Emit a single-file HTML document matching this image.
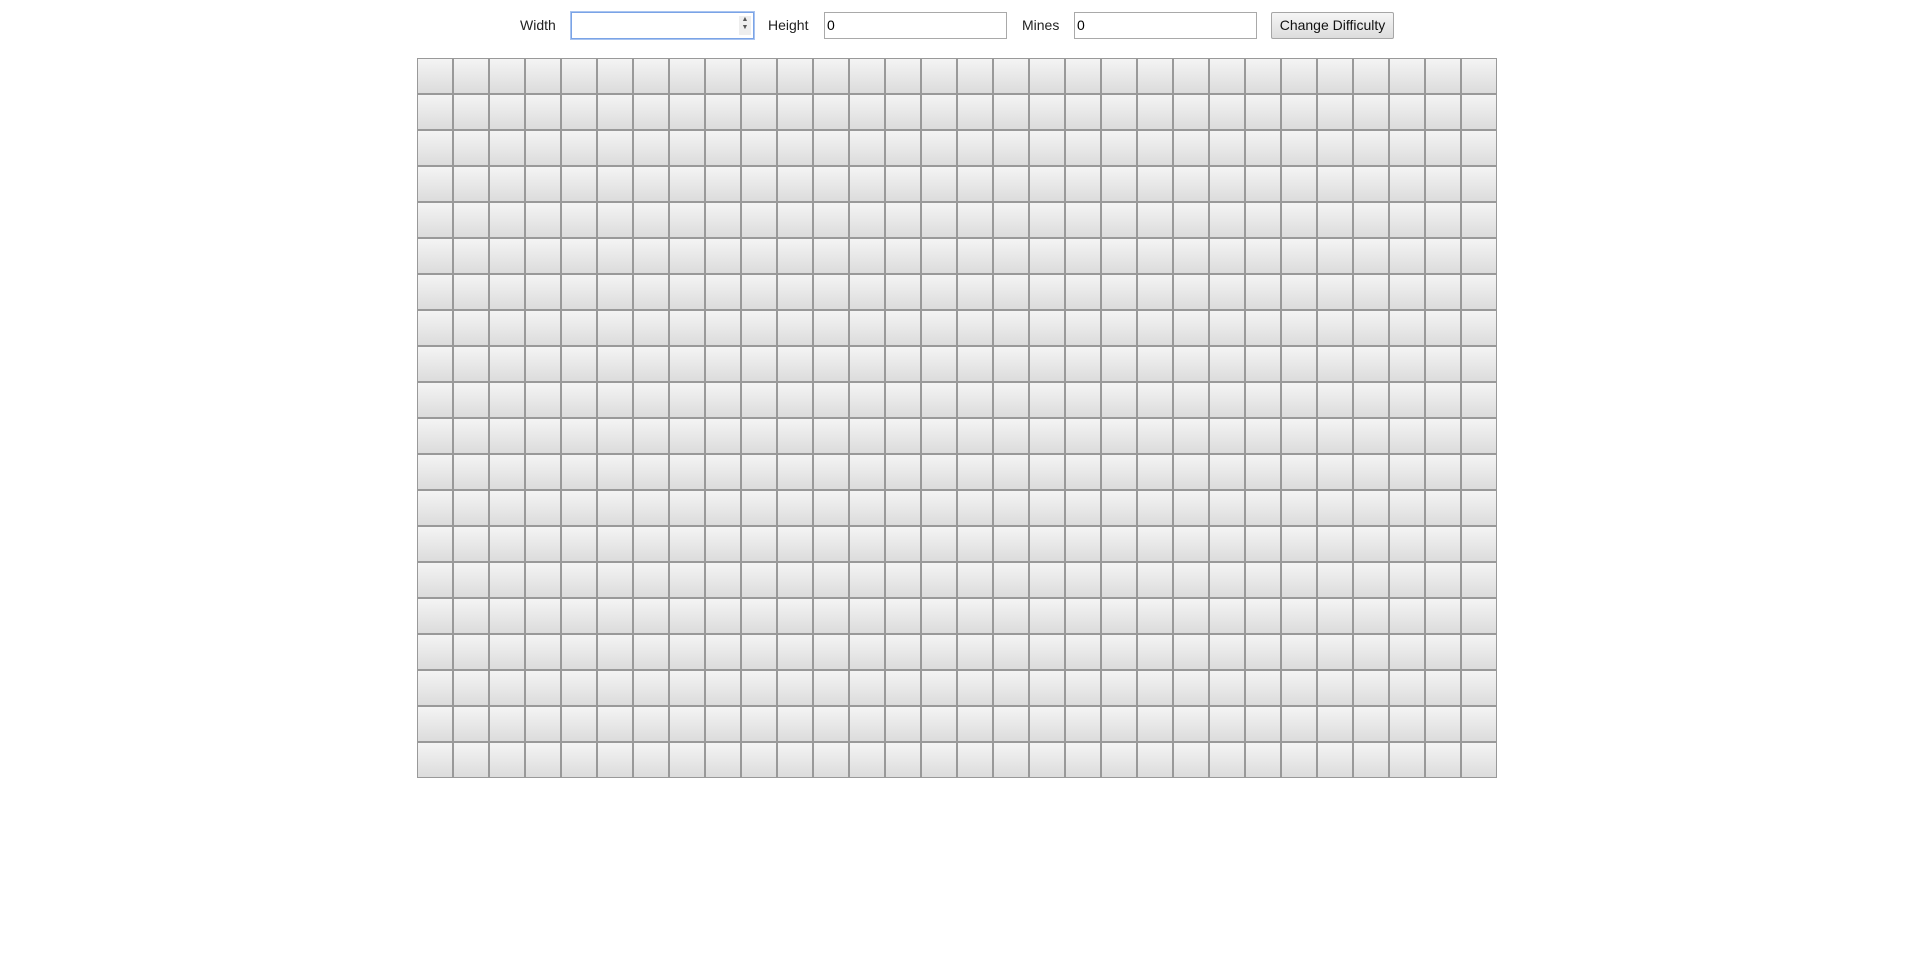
<!DOCTYPE html>
<html><head><meta charset="utf-8"><style>
html,body{margin:0;padding:0;background:#fff;width:1917px;height:974px;overflow:hidden;font-family:"Liberation Sans",Arial,sans-serif;}
.l{position:absolute;top:16px;font-size:14px;color:#222;line-height:18px;}
.in{position:absolute;top:12px;height:27px;box-sizing:border-box;border:1px solid #a9a9a9;background:#fff;font-size:14px;line-height:25px;padding-left:2px;color:#000;}
.btn{position:absolute;top:12px;left:1271px;width:123px;height:27px;box-sizing:border-box;border:1px solid #a6a6a6;border-radius:2px;background:linear-gradient(#f6f6f6,#dddddd);font-size:14px;line-height:25px;text-align:center;color:#111;}
#g{position:absolute;left:417px;top:58px;display:grid;grid-template-columns:repeat(30,36px);grid-auto-rows:36px;}
#g div{box-sizing:border-box;border:1px solid #999;background:linear-gradient(#f4f4f4,#dcdcdc);}
</style></head><body>
<div class="l" style="left:520px">Width</div>
<div class="in" style="left:571px;width:183px;border:1px solid #7aa3e6;box-shadow:0 0 0 1px #a9c4f0;"><div style="position:absolute;right:2px;top:3px;width:12px;height:19px;background:#eee;font-size:7px;line-height:8px;text-align:center;color:#555;">▲<br>▼</div></div>
<div class="l" style="left:768px">Height</div>
<div class="in" style="left:824px;width:183px">0</div>
<div class="l" style="left:1022px">Mines</div>
<div class="in" style="left:1074px;width:183px">0</div>
<div class="btn">Change Difficulty</div>
<div id="g"></div>
<script>
var g=document.getElementById('g'),h='';for(var i=0;i<600;i++)h+='<div></div>';g.innerHTML=h;
</script>
</body></html>
